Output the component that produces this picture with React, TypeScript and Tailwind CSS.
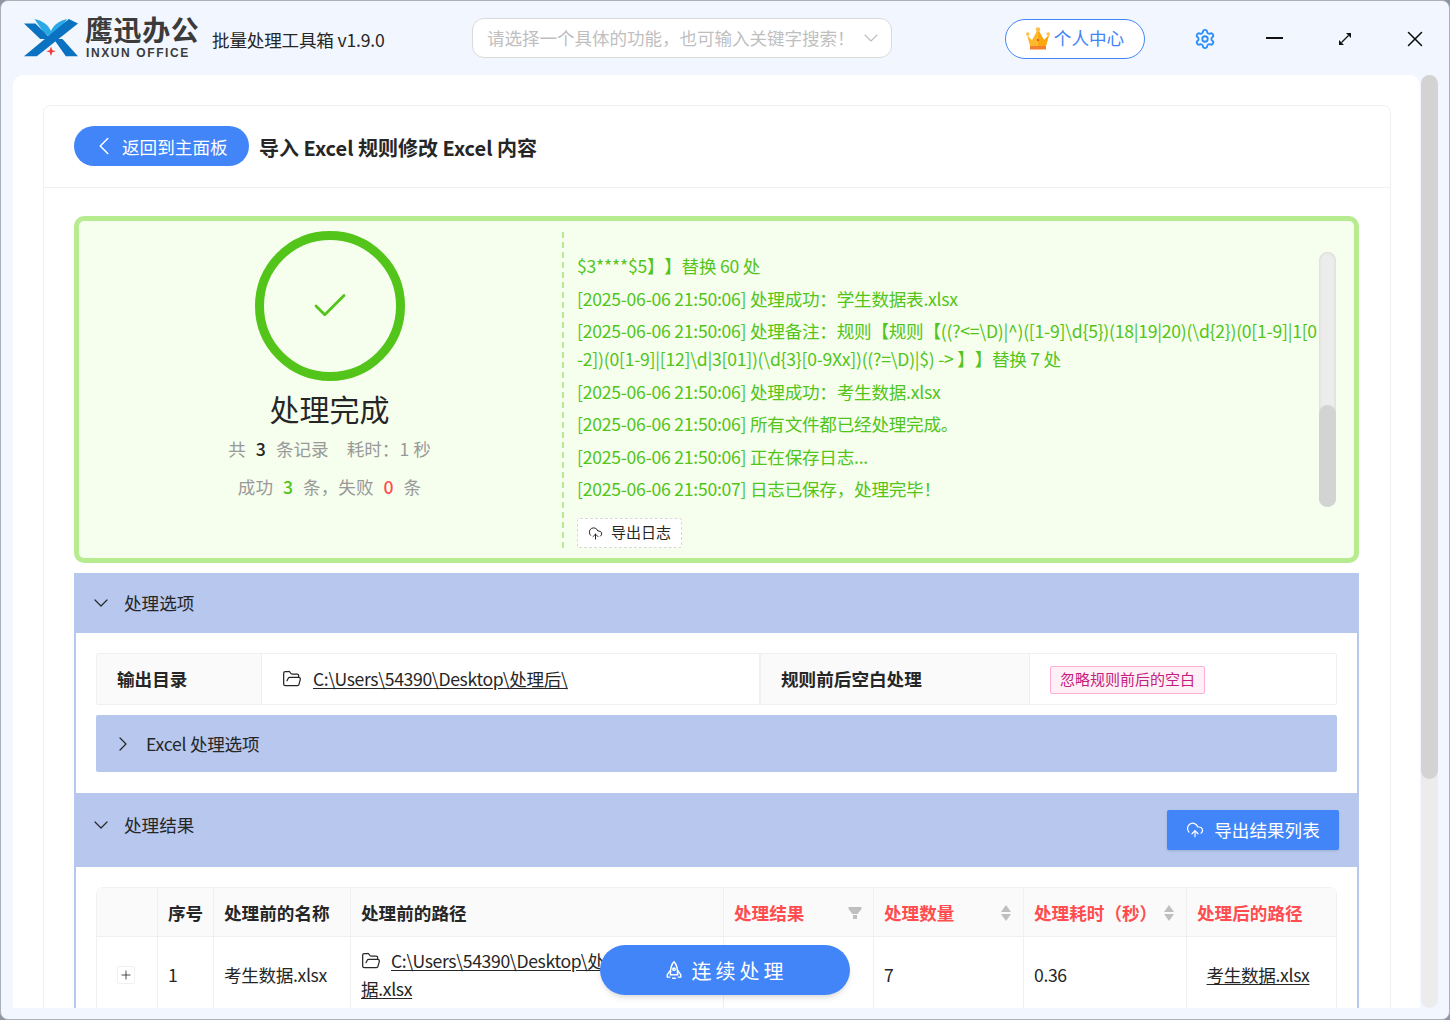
import { Check, ChevronDown, ChevronLeft, ChevronRight, CloudUpload, FolderOpen, Plus, Settings, X } from "lucide-react";

const FONT = "font-['Noto_Sans_CJK_SC','Noto_Sans',sans-serif]";

const LOGS = [
  "$3****$5】】替换 60 处",
  "[2025-06-06 21:50:06] 处理成功：学生数据表.xlsx",
  "[2025-06-06 21:50:06] 处理备注：规则【规则【((?<=\\D)|^)([1-9]\\d{5})(18|19|20)(\\d{2})(0[1-9]|1[0-2])(0[1-9]|[12]\\d|3[01])(\\d{3}[0-9Xx])((?=\\D)|$) -> 】】替换 7 处",
  "[2025-06-06 21:50:06] 处理成功：考生数据.xlsx",
  "[2025-06-06 21:50:06] 所有文件都已经处理完成。",
  "[2025-06-06 21:50:06] 正在保存日志...",
  "[2025-06-06 21:50:07] 日志已保存，处理完毕！",
];

function Logo() {
  return (
    <svg width="54" height="38" viewBox="72 57 160 112" className="shrink-0">
      <path d="M103 57 C125 62 142 72 152 92 C162 72 178 62 200 57 L172 96 L152 112 L130 96 Z" fill="#2aa9e6" />
      <path d="M72 70 H106 L152 116 L120 116 Z M160 116 L186 116 L232 167 H196 Z" fill="#0a72c0" />
      <path d="M205 57 L232 70 L110 167 H72 Z" fill="#0a72c0" />
      <path d="M152 138 L156 149 L166 152 L156 155 L152 166 L148 155 L138 152 L148 149 Z" fill="#ef3b3b" />
    </svg>
  );
}

function Crown() {
  return (
    <svg width="24" height="24" viewBox="0 0 24 24" className="shrink-0">
      <path d="M1 8 L6 13 L12 2 L18 13 L23 8 L20 19 H4 Z" fill="#fdb92e" />
      <path d="M12 3 L18 13 L23 8 L20 19 H12 Z" fill="#fba710" />
      <circle cx="1.8" cy="7" r="1.8" fill="#fdc04a" />
      <circle cx="22.2" cy="7" r="1.8" fill="#fdc04a" />
      <circle cx="12" cy="2.6" r="2.3" fill="#fdc04a" />
      <rect x="4" y="19" width="16" height="3.5" fill="#f47f2c" />
      <circle cx="12" cy="13" r="1" fill="#e03c31" />
    </svg>
  );
}

function MaxIcon() {
  return (
    <svg width="14" height="14" viewBox="0 0 14 14" className="shrink-0">
      <path d="M3.5 10.5 L10.5 3.5" stroke="#111" strokeWidth="1.2" />
      <path d="M8 1 H13 V6 Z M1 8 V13 H6 Z" fill="#111" />
    </svg>
  );
}

function RocketIcon() {
  return (
    <svg width="22" height="22" viewBox="0 0 18 18" fill="none" stroke="#fff" strokeWidth="1.2" className="shrink-0">
      <path d="M9 1.5 C11.5 4 12 7 12 12 H6 C6 7 6.5 4 9 1.5 Z" />
      <path d="M6 8.5 L3.5 12 V14 H6 M12 8.5 L14.5 12 V14 H12 M7.5 15 H10.5" />
      <circle cx="9" cy="7.5" r="1" />
    </svg>
  );
}

function SortCarets() {
  return (
    <svg width="12" height="18" viewBox="0 0 12 18" className="mr-[1px] shrink-0">
      <path d="M6 1 L11 8 H1 Z M1 10 H11 L6 17 Z" fill="#bfbfbf" />
    </svg>
  );
}

function FilterIcon() {
  return (
    <svg width="14" height="14" viewBox="0 0 14 14" className="shrink-0">
      <path d="M0.5 1 H13.5 V3 L9.5 8 H4.5 L0.5 3 Z M5 9 H9 V13 H5 Z" fill="#bfbfbf" />
    </svg>
  );
}

function Header() {
  return (
    <div className="flex h-[74px] shrink-0 items-center whitespace-nowrap pl-[23px]">
      <Logo />
      <div className="ml-[7px] mt-[-3px] flex w-[120px] shrink-0 flex-col text-[#3b3b3b]">
        <span className="text-[28px] font-bold leading-[30px] tracking-[0.6px]">鹰迅办公</span>
        <span className="ml-[1px] mt-[3px] font-['Liberation_Sans'] text-[12px] font-bold leading-[12px] tracking-[1.6px]">INXUN OFFICE</span>
      </div>
      <span className="ml-[7px] mt-[4px] w-[172px] shrink-0 text-[17.6px] tracking-[-0.2px] text-[#262626]">批量处理工具箱 v1.9.0</span>
      <div className="ml-[88px] flex h-[40px] w-[420px] shrink-0 items-center justify-between rounded-[12px] border border-[#d9d9d9] bg-white pl-[14px] pr-[8px]">
        <span className="text-[17.6px] tracking-[-0.1px] text-[#bfbfbf]">请选择一个具体的功能，也可输入关键字搜索！</span>
        <ChevronDown className="h-[24px] w-[24px] text-[#bfbfbf]" strokeWidth={1.1} />
      </div>
      <div className="ml-[113px] mt-[1px] flex h-[40px] w-[140px] shrink-0 items-center justify-center gap-[4px] rounded-[20px] border border-[#4285f9] bg-white">
        <Crown />
        <span className="text-[17.6px] text-[#4285f9]">个人中心</span>
      </div>
      <Settings className="ml-[49px] mt-[1px] h-[22px] w-[22px] shrink-0 text-[#2b8ffb]" strokeWidth={2} />
      <div className="ml-[50px] h-[2px] w-[17px] shrink-0 bg-[#111]" />
      <div className="ml-[55px] mt-[1px] shrink-0"><MaxIcon /></div>
      <X className="ml-[50px] mt-[1px] h-[26px] w-[26px] shrink-0 text-[#111]" strokeWidth={1.4} />
    </div>
  );
}

function ResultCard() {
  return (
    <div className="flex h-[347px] rounded-[10px] border-[5px] border-[#b7eb8f] bg-[#f6ffed]">
      <div className="flex w-[483px] shrink-0 flex-col items-center pl-[18px] pt-[10px]">
        <div className="flex h-[150px] w-[150px] items-center justify-center rounded-full border-[9px] border-[#52c41a]">
          <Check className="h-[42px] w-[42px] text-[#52c41a]" strokeWidth={1.6} />
        </div>
        <div className="mt-[7px] text-[30px] leading-[40px] text-[#262626]">处理完成</div>
        <div className="mt-[9px] flex items-center text-[17.6px] leading-[24px] text-[#999]">
          共<b className="mx-[10px] font-medium text-[#262626]">3</b>条记录<span className="ml-[18px]">耗时：1 秒</span>
        </div>
        <div className="mt-[14px] flex items-center text-[17.6px] leading-[24px] text-[#999]">
          成功<b className="mx-[10px] font-medium text-[#52c41a]">3</b>条，失败<b className="mx-[10px] font-medium text-[#ff4d4f]">0</b>条
        </div>
      </div>
      <div className="mb-[10px] mt-[11px] flex min-w-0 flex-1 border-l-2 border-dashed border-[#b7eb8f] pl-[13px] pt-[20px]">
        <div className="flex w-[760px] shrink-0 flex-col">
          <div className="flex h-[255px] shrink-0">
            <div className="w-[742px] shrink-0 overflow-hidden break-all text-[17.6px] leading-[28px] tracking-[-0.25px] text-[#52c41a] [text-spacing-trim:space-all]">
              {LOGS.map((line) => (
                <p key={line} className="mb-[4.5px]">{line}</p>
              ))}
            </div>
            <div className="flex w-[17px] shrink-0 flex-col rounded-full bg-[#ececec] shadow-[inset_0_0_3px_#ccc]">
              <div className="mt-[153px] flex-1 rounded-full bg-[#d3d3d3]" />
            </div>
          </div>
          <div className="mt-[11px] flex h-[30px] w-[105px] items-center justify-center gap-[8px] rounded-[3px] border border-dashed border-[#d9d9d9] bg-white pb-[2px] text-[15px] text-[#262626]">
            <CloudUpload className="mt-[2px] h-[15px] w-[15px]" strokeWidth={1.6} />
            导出日志
          </div>
        </div>
      </div>
    </div>
  );
}

function OptionsSection() {
  return (
    <div>
      <div className="flex h-[60px] items-center gap-[11px] bg-[#b7c7ee] pl-[15px] text-[17.6px] text-[#262626]">
        <ChevronDown className="h-[24px] w-[24px]" strokeWidth={1.2} />
        处理选项
      </div>
      <div className="border-x-2 border-[#b7c7ee] bg-white px-[20px] pb-[21px] pt-[20px]">
        <div className="flex h-[52px] rounded-[2px] border border-[#f0f0f0] text-[17.6px] text-[#262626]">
          <div className="flex w-[165px] items-center border-r border-[#f0f0f0] bg-[#fafafa] pl-[20px] font-bold">输出目录</div>
          <div className="flex w-[498px] items-center gap-[11px] border-r border-[#f0f0f0] pl-[20px]">
            <FolderOpen className="h-[20px] w-[20px]" strokeWidth={1.5} />
            <span className="tracking-[-0.35px] underline underline-offset-2">C:\Users\54390\Desktop\处理后\</span>
          </div>
          <div className="flex w-[270px] items-center border-x border-[#f0f0f0] bg-[#fafafa] pl-[20px] font-bold">规则前后空白处理</div>
          <div className="flex flex-1 items-center pl-[20px]">
            <span className="mt-[1px] flex h-[28px] items-center rounded-[2px] border border-[#ffadd2] bg-[#fff0f6] px-[9px] text-[15px] text-[#c41d7f]">忽略规则前后的空白</span>
          </div>
        </div>
        <div className="mt-[10px] flex h-[57px] items-center gap-[11px] rounded-[2px] bg-[#b7c7ee] pl-[15px] text-[17.6px] tracking-[-0.25px] text-[#262626]">
          <ChevronRight className="h-[24px] w-[24px]" strokeWidth={1.2} />
          <span className="mt-[2px]">Excel 处理选项</span>
        </div>
      </div>
    </div>
  );
}

const TH = "border-r border-b border-[#f0f0f0] px-[10px] pt-[2px] text-left font-bold whitespace-nowrap";

function ResultsSection() {
  return (
    <div>
      <div className="flex h-[74px] items-start justify-between bg-[#b7c7ee] pl-[15px] pr-[20px] text-[17.6px] text-[#262626]">
        <div className="mt-[19px] flex items-center gap-[11px]">
          <ChevronDown className="h-[24px] w-[24px]" strokeWidth={1.2} />
          处理结果
        </div>
        <div className="mt-[17px] flex h-[40px] w-[172px] items-center justify-center gap-[10px] rounded-[2px] bg-[#4285f9] text-white shadow-sm">
          <CloudUpload className="h-[18px] w-[18px]" strokeWidth={1.6} />
          导出结果列表
        </div>
      </div>
      <div className="border-x-2 border-[#b7c7ee] bg-white px-[20px] pt-[20px]">
        <table className="w-[1241px] table-fixed border-separate border-spacing-0 rounded-t-[8px] border-x border-t border-[#f0f0f0] text-[17.6px] text-[#262626]">
          <colgroup>
            <col className="w-[61px]" />
            <col className="w-[56px]" />
            <col className="w-[137px]" />
            <col className="w-[373px]" />
            <col className="w-[150px]" />
            <col className="w-[150px]" />
            <col className="w-[163px]" />
            <col />
          </colgroup>
          <thead className="bg-[#fafafa]">
            <tr className="h-[49px]">
              <th className={TH} />
              <th className={TH}>序号</th>
              <th className={TH}>处理前的名称</th>
              <th className={TH}>处理前的路径</th>
              <th className={`${TH} text-[#ff4d4f]`}>
                <div className="flex items-center justify-between pr-[1px]">处理结果<FilterIcon /></div>
              </th>
              <th className={`${TH} text-[#ff4d4f]`}>
                <div className="flex items-center justify-between">处理数量<SortCarets /></div>
              </th>
              <th className={`${TH} text-[#ff4d4f]`}>
                <div className="flex items-center justify-between">处理耗时（秒）<SortCarets /></div>
              </th>
              <th className="whitespace-nowrap border-b border-[#f0f0f0] px-[10px] pt-[2px] text-left font-bold text-[#ff4d4f]">处理后的路径</th>
            </tr>
          </thead>
          <tbody className="tracking-[-0.35px]">
            <tr className="h-[78px]">
              <td className="border-r border-[#f0f0f0] pb-[2px]">
                <div className="ml-[20px] flex h-[18px] w-[18px] items-center justify-center rounded-[2px] border border-[#f0f0f0] bg-white">
                  <Plus className="h-[14px] w-[14px]" strokeWidth={1.4} />
                </div>
              </td>
              <td className="border-r border-[#f0f0f0] px-[10px] pb-[2px]">1</td>
              <td className="border-r border-[#f0f0f0] px-[10px] pb-[2px]">考生数据.xlsx</td>
              <td className="border-r border-[#f0f0f0] px-[10px] pb-[2px] leading-[28px]">
                <span className="break-all">
                  <FolderOpen className="mr-[10px] inline h-[20px] w-[20px] align-[-3px]" strokeWidth={1.5} />
                  <span className="underline underline-offset-2">C:\Users\54390\Desktop\处理前\考生数据.xlsx</span>
                </span>
              </td>
              <td className="border-r border-[#f0f0f0]" />
              <td className="border-r border-[#f0f0f0] px-[10px] pb-[2px]">7</td>
              <td className="border-r border-[#f0f0f0] px-[10px] pb-[2px]">0.36</td>
              <td className="pb-[2px] pl-[10px] pr-[17px] text-center"><span className="underline underline-offset-2">考生数据.xlsx</span></td>
            </tr>
          </tbody>
        </table>
      </div>
    </div>
  );
}

export default function App() {
  return (
    <div className="h-[1020px] w-[1450px] overflow-hidden bg-[#8d95a3]">
      <div className={`relative flex h-[1020px] flex-col overflow-hidden rounded-[8px] border border-[#aab0ba] bg-[#f2f6fe] ${FONT}`}>
        <Header />
        <div className="flex h-[933px] shrink-0 pl-[12px]">
          <div className="h-[933px] w-[1407px] shrink-0 overflow-hidden rounded-t-[10px] bg-white pl-[30px] pt-[30px]">
            <div className="w-[1348px] rounded-t-[8px] border border-[#f0f0f0] pb-[40px]">
              <div className="flex h-[82px] items-center gap-[10px] border-b border-[#f0f0f0] pl-[30px]">
                <div className="mt-[-1px] flex h-[40px] w-[175px] items-center rounded-[20px] bg-[#4285f9] pl-[15px] text-[17.6px] text-white">
                  <ChevronLeft className="mr-[3px] h-[30px] w-[30px]" strokeWidth={1.2} />
                  <span className="mt-[2px]">返回到主面板</span>
                </div>
                <h1 className="mt-[3px] text-[20px] font-bold text-[#262626]">导入 Excel 规则修改 Excel 内容</h1>
              </div>
              <div className="pl-[30px] pr-[31px] pt-[28px]">
                <ResultCard />
                <div className="mt-[10px]">
                  <OptionsSection />
                  <ResultsSection />
                </div>
              </div>
            </div>
          </div>
          <div className="ml-[1px] flex h-[933px] w-[17px] shrink-0 flex-col rounded-full bg-[#ececec]">
            <div className="h-[704px] rounded-full bg-[#d3d3d3]" />
          </div>
        </div>
        <div className="absolute left-[599px] top-[944px] flex h-[50px] w-[250px] items-center justify-center gap-[7px] rounded-[25px] bg-[#4285f9] pt-[2px] text-[20px] tracking-[4px] text-white shadow-md">
          <RocketIcon />
          连续处理
        </div>
      </div>
    </div>
  );
}
